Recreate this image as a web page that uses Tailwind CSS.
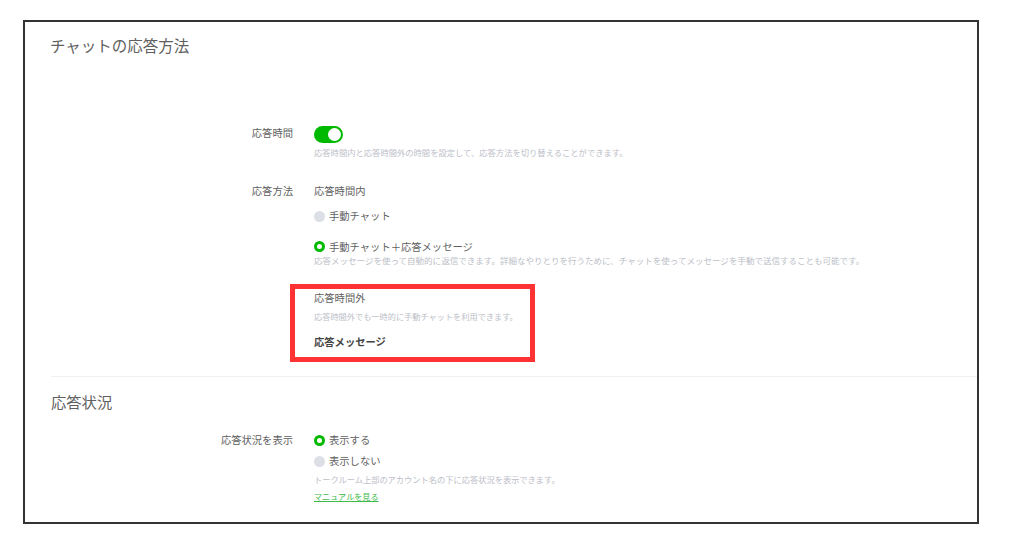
<!DOCTYPE html>
<html lang="ja">

<head>
    <meta charset="UTF-8">
    <title>チャットの応答方法</title>
    <script src="https://cdn.jsdelivr.net/npm/@tailwindcss/browser@4"></script>
</head>

<body class="bg-white h-[536px] overflow-hidden pt-[20px] pl-[23px] font-['Noto_Sans_CJK_JP','Noto_Sans',sans-serif] text-[#5f5f5f]">
    <div class="relative w-[956px] h-[504px] border-2 border-[#333] bg-white overflow-hidden">
        <!-- Chat response -->
        <h2 class="absolute left-[25px] top-[13px] text-[15.5px] leading-[20px] text-[#5f5f5f]">チャットの応答方法</h2>

        <div class="pt-[103px] pl-[26px]">
            <div class="flex">
                <div class="w-[242px] text-right text-[10.3px] leading-[16px]">応答時間</div>
                <div class="ml-[21px]">
                    <div class="relative mt-[1px] w-[29px] h-[17px] rounded-full bg-[#00b900]">
                        <span class="absolute right-[2px] top-[2px] w-[13px] h-[13px] rounded-full bg-white"></span>
                    </div>
                    <p class="mt-[3px] text-[8.3px] leading-[12px] text-[#bcc0c8]">応答時間内と応答時間外の時間を設定して、応答方法を切り替えることができます。</p>
                </div>
            </div>

            <div class="flex mt-[25px]">
                <div class="w-[242px] text-right text-[10.3px] leading-[16px]">応答方法</div>
                <div class="ml-[21px]">
                    <div class="text-[10.3px] leading-[16px]">応答時間内</div>
                    <div class="flex items-center mt-[9px] h-[16px]">
                        <span class="w-[11px] h-[11px] rounded-full bg-[#dcdfe5]"></span>
                        <span class="ml-[4px] text-[10.3px]">手動チャット</span>
                    </div>
                    <div class="flex items-center mt-[15px] h-[15px]">
                        <span class="w-[11px] h-[11px] rounded-full border-[3px] border-[#00b900] bg-white"></span>
                        <span class="ml-[4px] text-[10.3px]">手動チャット＋応答メッセージ</span>
                    </div>
                    <p class="text-[8.53px] leading-[12px] text-[#bcc0c8]">応答メッセージを使って自動的に返信できます。詳細なやりとりを行うために、チャットを使ってメッセージを手動で送信することも可能です。</p>

                    <div class="mt-[24px] text-[10.3px] leading-[16px]">応答時間外</div>
                    <p class="mt-[4px] text-[8.2px] leading-[12px] text-[#bcc0c8]">応答時間外でも一時的に手動チャットを利用できます。</p>
                    <div class="mt-[12px] text-[10.3px] leading-[16px] font-bold text-[#444]">応答メッセージ</div>
                </div>
            </div>
        </div>

        <!-- Highlight box -->
        <div class="absolute left-[265px] top-[262px] w-[245px] h-[78px] border-[5px] border-[#ff3333]"></div>

        <!-- Response status -->
        <div class="ml-[26px] mt-[26px] border-t border-[#f0f1f3] pt-[14px]">
            <h2 class="text-[15.3px] leading-[20px] text-[#5f5f5f]">応答状況</h2>
            <div class="flex mt-[21px]">
                <div class="w-[242px] text-right text-[10.3px] leading-[16px]">応答状況を表示</div>
                <div class="ml-[21px]">
                    <div class="flex items-center h-[16px]">
                        <span class="w-[11px] h-[11px] rounded-full border-[3px] border-[#00b900] bg-white"></span>
                        <span class="ml-[4px] text-[10.3px]">表示する</span>
                    </div>
                    <div class="flex items-center mt-[5px] h-[16px]">
                        <span class="w-[11px] h-[11px] rounded-full bg-[#dcdfe5]"></span>
                        <span class="ml-[4px] text-[10.3px]">表示しない</span>
                    </div>
                    <p class="mt-[4px] text-[8.24px] leading-[12px] text-[#bcc0c8]">トークルーム上部のアカウント名の下に応答状況を表示できます。</p>
                    <a class="block mt-[6px] text-[8.1px] leading-[12px] text-[#3dbb4a] underline">マニュアルを見る</a>
                </div>
            </div>
        </div>
    </div>
</body>

</html>
